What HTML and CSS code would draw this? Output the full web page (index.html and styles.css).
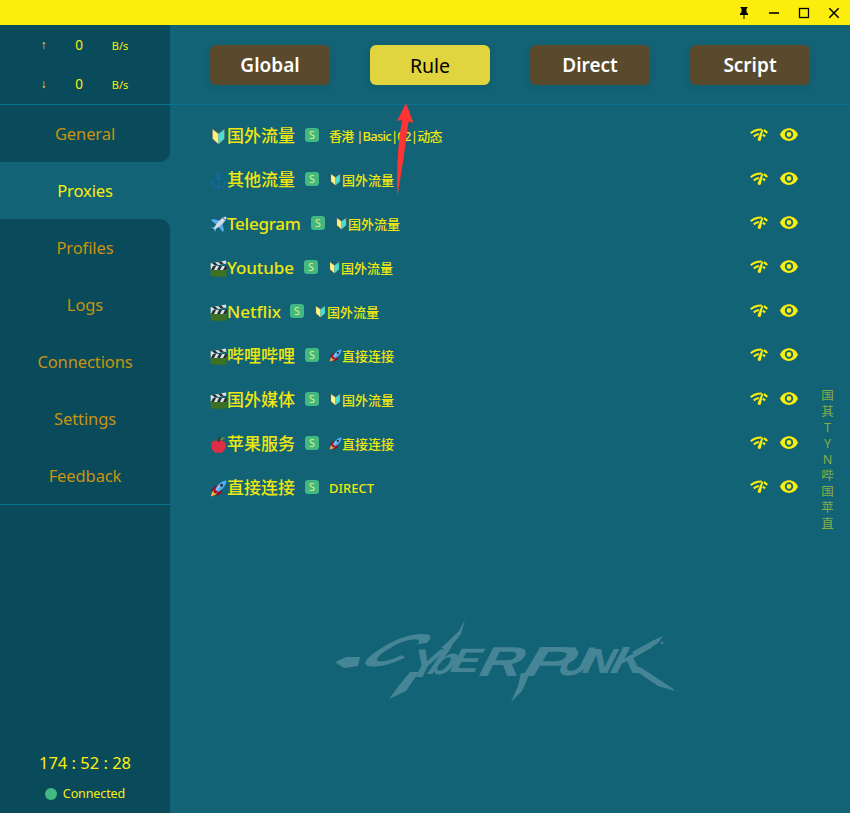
FILE: index.html
```html
<!DOCTYPE html>
<html lang="zh-CN">
<head>
<meta charset="utf-8">
<title>Proxies</title>
<link rel="stylesheet" href="styles.css">
</head>
<body>
<svg class="defs" aria-hidden="true">
  <symbol id="leaf" viewBox="0 0 17 17"><path d="M2 0 8.500 5 15 0V11L8.500 17 2 11Z" fill="#5b5f64"/><path d="M2.700 1.500 8.500 6V16L2.700 10.800Z" fill="#fff27e"/><path d="M14.300 1.500 8.500 6V16L14.300 10.800Z" fill="#48dfd2"/></symbol>
  <symbol id="anchor" viewBox="0 0 17 17"><g fill="none" stroke="#1767a0" stroke-width="1.500"><circle cx="8.500" cy="2.700" r="1.700"/><path d="M8.500 4.500V16M4.500 6.500h8M1.700 10c.5 4 3.300 6 6.800 6s6.300-2 6.800-6M.8 12l1-2.500L4 11.500M16.200 12l-1-2.500L13 11.500"/></g></symbol>
  <symbol id="plane" viewBox="0 0 17 17"><path d="M1 4.200 3 3l8 2-4 4ZM12 6l2 8-1.400 2L8 10ZM1 11l4 .2-1 2ZM6 16l-.2-4-2 1Z" fill="#55acee"/><path d="M3.500 13.500C5 9 11 1.500 15 .8c1.700-.2 1.800.7 1.200 2C14.500 7 8 12.500 3.500 13.500Z" fill="#d3dce4"/><path d="m13 2 2.500 2.300" stroke="#465d75"/></symbol>
  <symbol id="clap" viewBox="0 0 17 17"><rect x=".7" y="6" width="16" height="10.800" rx="1.500" fill="#3d7022"/><path d="M.7 6h16v4H.7Z" fill="#dbe2e7"/><path d="m1 10 2-4h3l-2 4Zm6 0 2-4h3l-2 4Zm6 0 2-4h2v3l-1 1Z" fill="#292f33"/><path d="m.4 3.500 15.500-3 .5 3-15.500 3Z" fill="#dbe2e7"/><path d="m2 3.100 3 2.600 3-.6-3-2.600Zm6-1.200 3 2.600 3-.6-3-2.600Z" fill="#292f33"/></symbol>
  <symbol id="rocket" viewBox="0 0 17 17"><path d="M1 11 5 6l4-.5L12 9l-.5 4-5 3.300L7 11Z" fill="#a0041e"/><path d="M4.500 11C6 6 11 .7 16.500.5 16.500 6 11 11 6.500 13Z" fill="#55acee"/><circle cx="11.500" cy="5.200" r="1.500" fill="#292f33"/><path d="m4 10-2 2.500L.7 16.500 5 15l2-2Z" fill="#ffac33"/><path d="m5 9 3 3-3 1.500L3.500 12Z" fill="#a0041e"/><path d="m10 5.500-4 5" stroke="#dbe8f0" stroke-width=".8"/></symbol>
  <symbol id="apple" viewBox="0 0 17 17"><path d="M8.500 5.500C5 3 1.200 5.500 1.200 9c0 4.200 3 8 5.300 8 1 0 1.300-.4 2-.4s1 .4 2 .4c2.500 0 5.300-4 5.300-8 0-3.500-3.800-6-7.300-3.500Z" fill="#dd2e44"/><path d="M8.500 6.500C8.500 3.500 9 2 10 1" fill="none" stroke="#662113" stroke-width="1.200"/><path d="M10 3.500C11 1.500 13 1 15 1.500 14.500 3.500 12 4.500 10 3.500Z" fill="#5c913b"/></symbol>
  <symbol id="speed" viewBox="0 0 18 14"><g fill="none" stroke="#fcee0c" stroke-width="2.100"><path d="M.8 5.300Q5 1.300 11.600 1.500"/><path d="M13.800 2.300Q15.800 3.300 17.200 5"/><path d="M3.800 8.500Q5.700 6.600 9 6"/><path d="M12.800 6.700Q14.100 7.300 15 8.500"/></g><path d="M11.900 1.300 13.200 1.700 10.800 12.200A1.700 1.700 0 0 1 7.700 11Z" fill="#fcee0c"/></symbol>
  <symbol id="eye" viewBox="0 0 18 13"><path fill-rule="evenodd" d="M0 6.500C3.300-2 14.700-2 18 6.500 14.700 15 3.300 15 0 6.500ZM9 2.300a4.200 4.200 0 1 0 0 8.400 4.200 4.200 0 0 0 0-8.400Zm0 1.800a2.400 2.400 0 1 1 0 4.800 2.400 2.400 0 0 1 0-4.800Z" fill="#fcee0c"/></symbol>
</svg>
<div class="app">
  <header class="titlebar">
    <svg viewBox="0 0 14 14"><path d="M3.500 1h7v1.200h-1V6l1.500 1.700V9H3V7.700L4.500 6V2.200h-1ZM6.500 9h1v4h-1Z"/></svg>
    <svg viewBox="0 0 14 14"><path d="M2 6.200h10v1.600H2Z"/></svg>
    <svg viewBox="0 0 14 14"><rect x="2.500" y="2.500" width="9" height="9" fill="none" stroke="#000" stroke-width="1.300"/></svg>
    <svg viewBox="0 0 14 14"><path d="m2.300 2.300 9.400 9.400m0-9.400-9.400 9.400" fill="none" stroke="#000" stroke-width="1.500"/></svg>
  </header>
  <div class="body">
    <aside class="sidebar">
      <div class="traffic">
        <div class="rate"><span class="dir">↑</span><span class="num">0</span><span class="unit">B/s</span></div>
        <div class="rate"><span class="dir">↓</span><span class="num">0</span><span class="unit">B/s</span></div>
      </div>
      <nav class="menu">
        <a class="item before">General</a>
        <a class="item current">Proxies</a>
        <a class="item after">Profiles</a>
        <a class="item">Logs</a>
        <a class="item">Connections</a>
        <a class="item">Settings</a>
        <a class="item">Feedback</a>
      </nav>
      <div class="status">
        <div class="clock">174 : 52 : 28</div>
        <div class="conn"><i class="dot"></i><span>Connected</span></div>
      </div>
    </aside>
    <main class="main">
      <div class="modes"><button>Global</button><button class="on">Rule</button><button>Direct</button><button>Script</button></div>
      <div class="groups">
        <div class="row"><svg class="em"><use href="#leaf"/></svg><span class="name">国外流量</span><b class="tag">S</b><span class="now mixed">香港 |Basic|02|动态</span><svg class="speed"><use href="#speed"/></svg><svg class="eye"><use href="#eye"/></svg></div>
        <div class="row"><svg class="em"><use href="#anchor"/></svg><span class="name">其他流量</span><b class="tag">S</b><svg class="sm"><use href="#leaf"/></svg><span class="now">国外流量</span><svg class="speed"><use href="#speed"/></svg><svg class="eye"><use href="#eye"/></svg></div>
        <div class="row"><svg class="em"><use href="#plane"/></svg><span class="name telegram">Telegram</span><b class="tag">S</b><svg class="sm"><use href="#leaf"/></svg><span class="now">国外流量</span><svg class="speed"><use href="#speed"/></svg><svg class="eye"><use href="#eye"/></svg></div>
        <div class="row"><svg class="em"><use href="#clap"/></svg><span class="name youtube">Youtube</span><b class="tag">S</b><svg class="sm"><use href="#leaf"/></svg><span class="now">国外流量</span><svg class="speed"><use href="#speed"/></svg><svg class="eye"><use href="#eye"/></svg></div>
        <div class="row"><svg class="em"><use href="#clap"/></svg><span class="name netflix">Netflix</span><b class="tag">S</b><svg class="sm"><use href="#leaf"/></svg><span class="now">国外流量</span><svg class="speed"><use href="#speed"/></svg><svg class="eye"><use href="#eye"/></svg></div>
        <div class="row"><svg class="em"><use href="#clap"/></svg><span class="name">哔哩哔哩</span><b class="tag">S</b><svg class="sm"><use href="#rocket"/></svg><span class="now">直接连接</span><svg class="speed"><use href="#speed"/></svg><svg class="eye"><use href="#eye"/></svg></div>
        <div class="row"><svg class="em"><use href="#clap"/></svg><span class="name">国外媒体</span><b class="tag">S</b><svg class="sm"><use href="#leaf"/></svg><span class="now">国外流量</span><svg class="speed"><use href="#speed"/></svg><svg class="eye"><use href="#eye"/></svg></div>
        <div class="row"><svg class="em"><use href="#apple"/></svg><span class="name">苹果服务</span><b class="tag">S</b><svg class="sm"><use href="#rocket"/></svg><span class="now">直接连接</span><svg class="speed"><use href="#speed"/></svg><svg class="eye"><use href="#eye"/></svg></div>
        <div class="row"><svg class="em"><use href="#rocket"/></svg><span class="name">直接连接</span><b class="tag">S</b><span class="now">DIRECT</span><svg class="speed"><use href="#speed"/></svg><svg class="eye"><use href="#eye"/></svg></div>
      </div>
      <svg class="brand" viewBox="330 615 350 92">
        <g class="letters">
          <text transform="matrix(1 0 -1.500 1 352 666)" font-size="46" textLength="42" lengthAdjust="spacingAndGlyphs">C</text>
          <text transform="matrix(1 0 -.5 1 404 677)" font-size="40" textLength="30" lengthAdjust="spacingAndGlyphs">Y</text>
          <text transform="matrix(1 0 -.7 1 424 674)" font-size="38" textLength="25" lengthAdjust="spacingAndGlyphs">b</text>
          <text transform="matrix(1 0 -.5 1 447 672)" font-size="34" textLength="29" lengthAdjust="spacingAndGlyphs">E</text>
          <text transform="matrix(1 0 -.5 1 475 676)" font-size="42" textLength="43" lengthAdjust="spacingAndGlyphs">R</text>
          <text transform="matrix(1 0 -.6 1 518 676)" font-size="42" textLength="50" lengthAdjust="spacingAndGlyphs">P</text>
          <text transform="matrix(1 0 -.5 1 554 675)" font-size="40" textLength="30" lengthAdjust="spacingAndGlyphs">U</text>
          <text transform="matrix(1 0 -.5 1 579 673)" font-size="35" textLength="31" lengthAdjust="spacingAndGlyphs">N</text>
          <text transform="matrix(1 0 -.5 1 607 673)" font-size="38" textLength="34" lengthAdjust="spacingAndGlyphs">K</text>
        </g>
        <path d="M335 662 346 657H360L358 666 344 668ZM389 699 397 688 410 672 419 672 406 691ZM441 648 459 631 465 620 461 634 448 650ZM511 702 518 686 521 673 530 673 522 691ZM632 652 652 641 663 636 658 643 636 656ZM630 667 640 667 672 688 675 691 658 686Z"/>
        <circle cx="662" cy="643" r="1.300"/>
      </svg>
      <div class="index"><span>国</span><span>其</span><span>T</span><span>Y</span><span>N</span><span>哔</span><span>国</span><span>苹</span><span>直</span></div>
      <svg class="arrow" viewBox="0 0 20 94"><path d="M10 0 17.500 20 12.500 18.500Q8 55 1.500 93Q-.5 55 6 17L1 18Z" fill="#fd3434"/></svg>
    </main>
  </div>
</div>
</body>
</html>
```
FILE: styles.css
```css
* { box-sizing: border-box; }
body { margin: 0; font-family: "Noto Sans", "Noto Sans CJK SC", sans-serif; color: #fcee0c; }
.defs { position: absolute; width: 0; height: 0; }
.app { width: 850px; height: 813px; display: flex; flex-direction: column; overflow: hidden; background: #126375; }
.titlebar { height: 25px; background: #fcee0c; display: flex; justify-content: flex-end; align-items: center; gap: 16px; padding: 1px 9px 0 0; }
.titlebar svg { width: 14px; height: 14px; }
.body { flex: 1; display: flex; min-height: 0; }
.sidebar { width: 170px; background: #094b5a; display: flex; flex-direction: column; }
.traffic { height: 80px; border-bottom: 1px solid #087590; padding-top: 1px; }
.rate { height: 39px; display: flex; align-items: center; line-height: 39px; }
.dir { width: 87px; text-align: center; font-size: 12px; font-family: "Liberation Sans", sans-serif; }
.num { width: 24px; margin-left: -20px; text-align: center; font-size: 13.500px; }
.unit { width: 34px; margin-left: 12px; text-align: center; font-size: 11px; }
.menu { border-bottom: 1px solid #087590; background: #126375; }
.item { height: 57px; display: flex; align-items: center; justify-content: center; background: #094b5a; color: #c8940e; font-size: 16.500px; letter-spacing: -.1px; }
.item.before { border-bottom-right-radius: 10px; }
.item.current { background: #126375; color: #fcee0c; }
.item.after { border-top-right-radius: 10px; }
.status { margin-top: auto; height: 68px; display: flex; flex-direction: column; align-items: center; }
.clock { font-size: 16.500px; line-height: 35px; }
.conn { display: flex; align-items: center; gap: 6px; font-size: 12.500px; line-height: 27px; letter-spacing: -.1px; }
.dot { width: 12px; height: 12px; border-radius: 50%; background: #42b983; }
.main { flex: 1; position: relative; }
.modes { height: 80px; border-bottom: 1px solid #087590; padding: 20px 40px 0; display: flex; gap: 40px; }
.modes button { width: 120px; height: 40px; padding: 0; border: 0; border-radius: 6px; background: #594a2e; color: #fff; font: 600 19px "Noto Sans", sans-serif; box-shadow: 0 2px 8px rgba(0, 0, 0, .08); }
.modes .on { background: #e0d43f; color: #000; font-weight: 400; font-size: 19.500px; }
.groups { padding: 8px 52px 0 40px; }
.row { height: 44px; display: flex; align-items: center; }
.em { width: 17px; height: 17px; margin-top: 3px; }
.name { font-size: 17px; font-weight: 500; line-height: 44px; white-space: nowrap; padding-top: 1px; height: 44px; color: #f0e610; }
.telegram { width: 74px; letter-spacing: -.25px; }
.youtube { width: 67px; letter-spacing: -.1px; }
.netflix { width: 53px; }
.tag { width: 14px; height: 14px; margin: 0 10px; border-radius: 3px; background: #42b983; color: #e9ee7b; font-size: 10.500px; font-weight: 400; line-height: 14px; text-align: center; }
.sm { width: 13px; height: 13px; margin: 1px 0 0; }
.now { font-size: 13px; font-weight: 500; line-height: 44px; height: 44px; padding-top: 1px; white-space: nowrap; color: #f0e610; }
.mixed { letter-spacing: -.75px; }
.speed { width: 18px; height: 14px; margin: 0 0 1px auto; }
.eye { width: 18px; height: 13px; margin: 0 0 2px 12px; }
.brand { position: absolute; left: 160px; top: 590px; width: 350px; height: 92px; fill: #468596; }
.letters { font: bold 33px "Liberation Sans", sans-serif; }
.index { position: absolute; left: 648px; top: 363px; width: 19px; display: flex; flex-direction: column; align-items: center; font-size: 12.500px; line-height: 16px; color: #86ad48; }
.arrow { position: absolute; left: 226px; top: 78px; width: 20px; height: 94px; }
```
